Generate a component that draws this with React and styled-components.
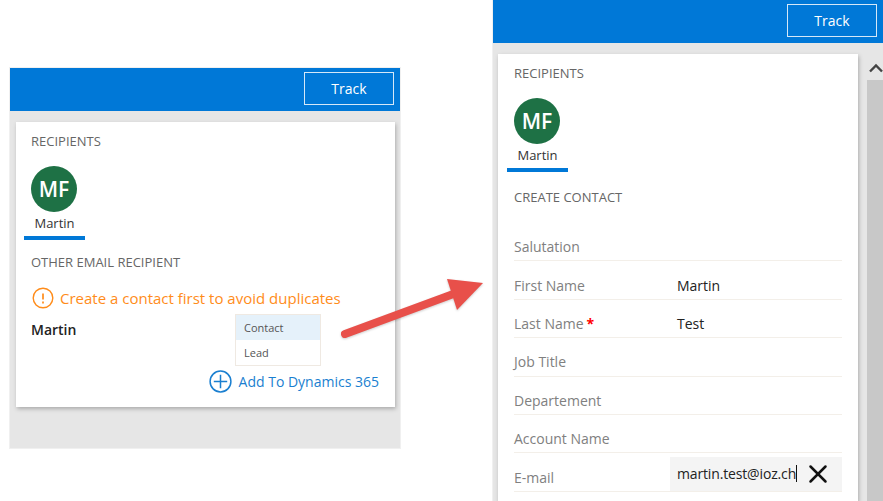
import styled, { createGlobalStyle } from "styled-components";
import { X } from "lucide-react";

const GlobalStyle = createGlobalStyle`
    html, body {
        margin: 0;
        height: 501px;
        overflow: hidden;
        background: #fff;
    }
    body {
        font-family: "Open Sans", "Noto Sans", sans-serif;
    }
`;

function Recipient() {
    return (
        <RecipientTab>
            <Avatar>MF</Avatar>
            <RecipientName>Martin</RecipientName>
        </RecipientTab>
    );
}

const fields = [
    { label: "Salutation" },
    { label: "First Name", value: "Martin" },
    { label: "Last Name", value: "Test", required: true },
    { label: "Job Title" },
    { label: "Departement" },
    { label: "Account Name" },
];

export default function App() {
    return (
        <Page>
            <GlobalStyle />

            <LeftColumn>
                <Header>
                    <TrackButton>Track</TrackButton>
                </Header>
                <LeftBody>
                    <Card>
                        <SectionLabel>RECIPIENTS</SectionLabel>
                        <Recipient />
                        <OtherLabel>OTHER EMAIL RECIPIENT</OtherLabel>
                        <Warning>
                            <svg width="22" height="22" viewBox="0 0 22 22" fill="none" stroke="#ff8c1a">
                                <circle cx="11" cy="11" r="9.8" strokeWidth="1.4" />
                                <path d="M11 6.5v6M11 14.6v1.8" strokeWidth="1.7" />
                            </svg>
                            Create a contact first to avoid duplicates
                        </Warning>
                        <ContactName>Martin</ContactName>
                        <AddLink>
                            <svg width="23" height="23" viewBox="0 0 23 23" fill="none" stroke="#1a7fd0">
                                <circle cx="11.5" cy="11.5" r="10.4" strokeWidth="1.5" />
                                <path d="M11.5 4.8v13.4M4.8 11.5h13.4" strokeWidth="1.5" />
                            </svg>
                            Add To Dynamics 365
                        </AddLink>
                        <Dropdown>
                            <DropdownItem $active>Contact</DropdownItem>
                            <DropdownItem>Lead</DropdownItem>
                        </Dropdown>
                    </Card>
                </LeftBody>
            </LeftColumn>

            <RightColumn>
                <Header>
                    <TrackButton>Track</TrackButton>
                </Header>
                <RightBody>
                    <RightCard>
                        <SectionLabel>RECIPIENTS</SectionLabel>
                        <Recipient />
                        <CreateLabel>CREATE CONTACT</CreateLabel>
                        <Form>
                            {fields.map((f) => (
                                <FieldRow key={f.label}>
                                    <FieldLabel>
                                        {f.label}
                                        {f.required && <Required>*</Required>}
                                    </FieldLabel>
                                    <FieldValue>{f.value}</FieldValue>
                                </FieldRow>
                            ))}
                            <FieldRow>
                                <FieldLabel>E-mail</FieldLabel>
                                <EmailInput>
                                    <EmailText>martin.test@ioz.ch</EmailText>
                                    <Caret />
                                    <X size={30} color="#111" strokeWidth={2} />
                                </EmailInput>
                            </FieldRow>
                        </Form>
                    </RightCard>
                    <Scrollbar>
                        <ScrollUp>
                            <svg width="14" height="10" viewBox="0 0 14 10" fill="none" stroke="#444" strokeWidth="2.4">
                                <path d="M1 8.5l6-6 6 6" />
                            </svg>
                        </ScrollUp>
                        <ScrollTrack />
                    </Scrollbar>
                </RightBody>
            </RightColumn>

            <Arrow width="883" height="501" viewBox="0 0 883 501">
                <path d="M345 334L456 293" stroke="#e8504a" strokeWidth="8" strokeLinecap="round" />
                <path d="M447 279L483 283L457 310Z" fill="#e8504a" />
            </Arrow>
        </Page>
    );
}

const Page = styled.div`
    position: relative;
    display: flex;
    align-items: flex-start;
    width: 883px;
    height: 501px;
    overflow: hidden;
`;

const LeftColumn = styled.section`
    display: flex;
    flex-direction: column;
    width: 390px;
    margin: 68px 0 0 10px;
    box-shadow: 0 0 0 1px #f0f0f0;
`;

const RightColumn = styled.section`
    display: flex;
    flex-direction: column;
    width: 390px;
    height: 501px;
    margin-left: 93px;
    box-shadow: -1px 0 0 #f0f0f0;
`;

const Header = styled.header`
    display: flex;
    justify-content: flex-end;
    align-items: flex-start;
    box-sizing: border-box;
    height: 43px;
    padding: 4px 6px 0 0;
    background: #0078d7;
`;

const TrackButton = styled.button`
    width: 90px;
    height: 33px;
    padding: 0;
    border: 1px solid #d5e8f8;
    background: transparent;
    color: #fff;
    font: 14px "Open Sans", sans-serif;
`;

const LeftBody = styled.div`
    box-sizing: border-box;
    height: 337px;
    padding: 11px 5px 0 6px;
    background: #e6e6e6;
`;

const RightBody = styled.div`
    display: flex;
    justify-content: space-between;
    flex: 1;
    padding-left: 5px;
    background: #e6e6e6;
`;

const Card = styled.div`
    position: relative;
    padding: 9px 16px 14px 15px;
    background: #fff;
    box-shadow: 1px 2px 4px rgba(0, 0, 0, 0.25);
`;

const RightCard = styled.div`
    width: 360px;
    margin-top: 11px;
    box-sizing: border-box;
    padding: 9px 16px 0;
    background: #fff;
    box-shadow: 1px 2px 4px rgba(0, 0, 0, 0.25);
`;

const SectionLabel = styled.h3`
    margin: 0;
    font-size: 13px;
    font-weight: 400;
    line-height: 20px;
    color: #666;
`;

const OtherLabel = styled(SectionLabel)`
    margin-top: 12px;
`;

const CreateLabel = styled(SectionLabel)`
    margin-top: 15px;
`;

const RecipientTab = styled.div`
    display: flex;
    flex-direction: column;
    align-items: center;
    width: 61px;
    margin: 15px 0 0 -7px;
    padding-bottom: 3px;
    border-bottom: 4px solid #0078d7;
`;

const Avatar = styled.div`
    display: flex;
    justify-content: center;
    align-items: center;
    width: 46px;
    height: 46px;
    margin-right: 1px;
    border-radius: 50%;
    background: #1e7145;
    color: #fff;
    font-size: 21px;
    font-weight: 600;
`;

const RecipientName = styled.div`
    margin-top: 1px;
    font-size: 13px;
    line-height: 20px;
    color: #333;
`;

const Warning = styled.div`
    display: flex;
    align-items: center;
    gap: 6px;
    height: 22px;
    margin: 15px 0 0 1px;
    font-size: 15px;
    color: #ff8c1a;
`;

const ContactName = styled.div`
    margin-top: 11px;
    font-size: 14px;
    font-weight: 600;
    line-height: 20px;
    color: #222;
`;

const AddLink = styled.a`
    display: flex;
    justify-content: flex-end;
    align-items: center;
    gap: 7px;
    height: 23px;
    margin-top: 30px;
    font-size: 14px;
    color: #1a7fd0;
`;

const Dropdown = styled.div`
    position: absolute;
    left: 219px;
    top: 192px;
    width: 84px;
    border: 1px solid #efe9e2;
    background: #fff;
`;

const DropdownItem = styled.div`
    height: 25px;
    padding-left: 8px;
    font-size: 11px;
    line-height: 25px;
    color: #555;
    background: ${(p) => (p.$active ? "#e5f1fa" : "#fff")};
`;

const Form = styled.div`
    margin-top: 16px;
`;

const FieldRow = styled.div`
    display: flex;
    align-items: center;
    box-sizing: border-box;
    height: 38.4px;
    padding-top: 10px;
    border-bottom: 1px solid #f3efe9;
`;

const FieldLabel = styled.span`
    width: 156px;
    font-size: 14px;
    color: #808080;
`;

const Required = styled.span`
    margin-left: 3px;
    font-weight: 700;
    color: #f00;
`;

const FieldValue = styled.span`
    padding-left: 7px;
    font-size: 14px;
    color: #222;
`;

const EmailInput = styled.div`
    display: flex;
    align-items: center;
    flex: 1;
    align-self: flex-end;
    height: 34px;
    padding-left: 7px;
    background: #f4f4f4;
`;

const EmailText = styled.span`
    font-size: 14px;
    letter-spacing: -0.15px;
    color: #222;
`;

const Caret = styled.span`
    flex: none;
    width: 1px;
    height: 17px;
    margin-right: 6px;
    background: #111;
`;

const Scrollbar = styled.div`
    display: flex;
    flex-direction: column;
    width: 16px;
`;

const ScrollUp = styled.div`
    display: flex;
    justify-content: flex-end;
    box-sizing: border-box;
    height: 37px;
    padding-top: 20px;
`;

const ScrollTrack = styled.div`
    flex: 1;
    background: #c8c8c8;
`;

const Arrow = styled.svg`
    position: absolute;
    left: 0;
    top: 0;
    pointer-events: none;
    filter: drop-shadow(0 1px 1px rgba(0, 0, 0, 0.2));
`;
